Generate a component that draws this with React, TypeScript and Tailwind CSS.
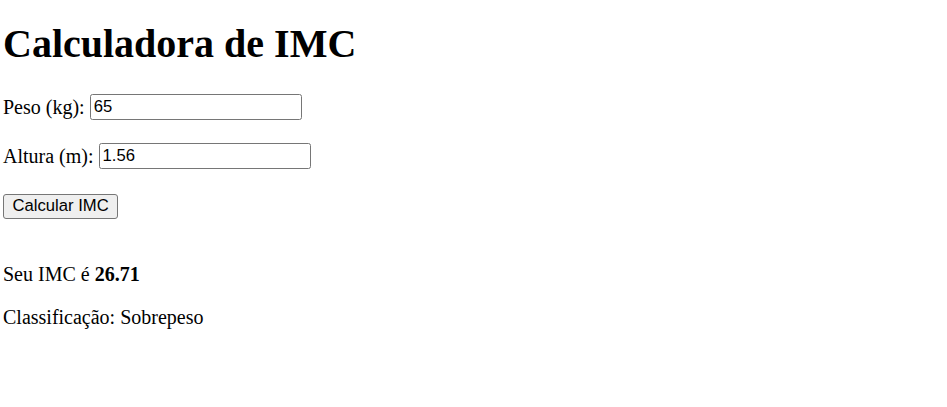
import { useState } from 'react';

const App = () => {
  const [peso, setPeso] = useState('65');
  const [altura, setAltura] = useState('1.56');

  return (
    <div className="min-h-screen bg-white pl-[3px] pt-[21px] font-['Liberation_Serif','Times_New_Roman',serif] text-[20px] leading-[23px] text-black">
      <h1 className="text-[40px] font-bold leading-[46px]">Calculadora de IMC</h1>

      {/* Form */}
      <div className="mt-[27px] flex h-[26px] items-center gap-[5px]">
        <span>Peso (kg):</span>
        <input
          value={peso}
          onChange={(e) => setPeso(e.target.value)}
          className="h-[26px] w-[212px] rounded-[2.5px] border border-[#767676] bg-white px-[3px] font-['Liberation_Sans',Arial,sans-serif] text-[16.67px] text-black outline-none"
        />
      </div>

      <div className="mt-[23px] flex h-[26px] items-center gap-[5px]">
        <span>Altura (m):</span>
        <input
          value={altura}
          onChange={(e) => setAltura(e.target.value)}
          className="h-[26px] w-[212px] rounded-[2.5px] border border-[#767676] bg-white px-[3px] font-['Liberation_Sans',Arial,sans-serif] text-[16.67px] text-black outline-none"
        />
      </div>

      <button className="mt-[25px] flex h-[25px] items-center rounded-[3px] border border-[#767676] bg-[#efefef] px-[8.5px] font-['Liberation_Sans',Arial,sans-serif] text-[16.67px] leading-none text-black">
        Calcular IMC
      </button>

      {/* Result */}
      <p className="mt-[44px]">
        Seu IMC é <strong className="font-bold">26.71</strong>
      </p>
      <p className="mt-[20px]">Classificação: Sobrepeso</p>
    </div>
  );
};

export default App;
